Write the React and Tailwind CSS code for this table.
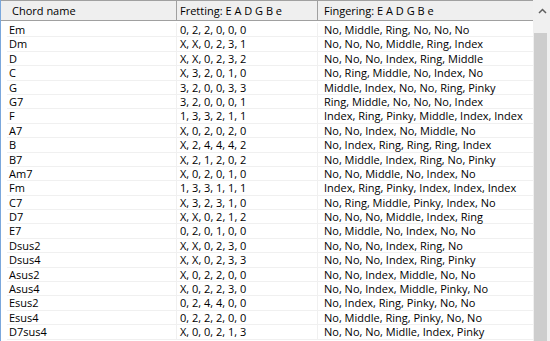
const chords = [
  ['Em', '0, 2, 2, 0, 0, 0', 'No, Middle, Ring, No, No, No'],
  ['Dm', 'X, X, 0, 2, 3, 1', 'No, No, No, Middle, Ring, Index'],
  ['D', 'X, X, 0, 2, 3, 2', 'No, No, No, Index, Ring, Middle'],
  ['C', 'X, 3, 2, 0, 1, 0', 'No, Ring, Middle, No, Index, No'],
  ['G', '3, 2, 0, 0, 3, 3', 'Middle, Index, No, No, Ring, Pinky'],
  ['G7', '3, 2, 0, 0, 0, 1', 'Ring, Middle, No, No, No, Index'],
  ['F', '1, 3, 3, 2, 1, 1', 'Index, Ring, Pinky, Middle, Index, Index'],
  ['A7', 'X, 0, 2, 0, 2, 0', 'No, No, Index, No, Middle, No'],
  ['B', 'X, 2, 4, 4, 4, 2', 'No, Index, Ring, Ring, Ring, Index'],
  ['B7', 'X, 2, 1, 2, 0, 2', 'No, Middle, Index, Ring, No, Pinky'],
  ['Am7', 'X, 0, 2, 0, 1, 0', 'No, No, Middle, No, Index, No'],
  ['Fm', '1, 3, 3, 1, 1, 1', 'Index, Ring, Pinky, Index, Index, Index'],
  ['C7', 'X, 3, 2, 3, 1, 0', 'No, Ring, Middle, Pinky, Index, No'],
  ['D7', 'X, X, 0, 2, 1, 2', 'No, No, No, Middle, Index, Ring'],
  ['E7', '0, 2, 0, 1, 0, 0', 'No, Middle, No, Index, No, No'],
  ['Dsus2', 'X, X, 0, 2, 3, 0', 'No, No, No, Index, Ring, No'],
  ['Dsus4', 'X, X, 0, 2, 3, 3', 'No, No, No, Index, Ring, Pinky'],
  ['Asus2', 'X, 0, 2, 2, 0, 0', 'No, No, Index, Middle, No, No'],
  ['Asus4', 'X, 0, 2, 2, 3, 0', 'No, No, Index, Middle, Pinky, No'],
  ['Esus2', '0, 2, 4, 4, 0, 0', 'No, Index, Ring, Pinky, No, No'],
  ['Esus4', '0, 2, 2, 2, 0, 0', 'No, Middle, Ring, Pinky, No, No'],
  ['D7sus4', 'X, 0, 0, 2, 1, 3', 'No, No, No, Midlle, Index, Pinky'],
]

export default function App() {
  return (
    <div className="flex h-[341px] w-[550px] overflow-hidden border-l border-[#7aa7dc] bg-white text-[11px] text-black" style={{ fontFamily: '"Open Sans", "Noto Sans", sans-serif' }}>
      <div className="flex-1 overflow-hidden">
        <div className="flex h-[21px] border-y border-[#a0a0a0] bg-[#efefef] leading-[19px]">
          <div className="w-[176px] border-r border-[#a0a0a0] pl-[11px]">Chord name</div>
          <div className="w-[141px] border-r border-[#a0a0a0] pl-[3px]">Fretting: E A D G B e</div>
          <div className="flex-1 pl-[6px]">Fingering: E A D G B e</div>
        </div>
        <div className="pt-[2px]">
          {chords.map(([name, fret, finger]) => (
            <div key={name} className="ml-[6px] flex h-[14.4px] border-b border-[#f0f0f0] leading-[14px]">
              <div className="w-[170px] border-r border-[#f0f0f0] pl-[2px]">{name}</div>
              <div className="w-[141px] border-r border-[#f0f0f0] pl-[3px]">{fret}</div>
              <div className="flex-1 pl-[6px]">{finger}</div>
            </div>
          ))}
        </div>
      </div>
      <div className="flex w-[17px] flex-col border-l border-[#f0f0f0] bg-[#f0f0f0]">
        <div className="flex h-[33px] items-start justify-center pt-[8px]">
          <svg width="9" height="6" viewBox="0 0 9 6">
            <path d="M1 5 L4.5 1.5 L8 5" fill="none" stroke="#606060" strokeWidth="1.5" />
          </svg>
        </div>
        <div className="mr-[3px] flex-1 bg-[#cdcdcd]" />
      </div>
    </div>
  )
}
